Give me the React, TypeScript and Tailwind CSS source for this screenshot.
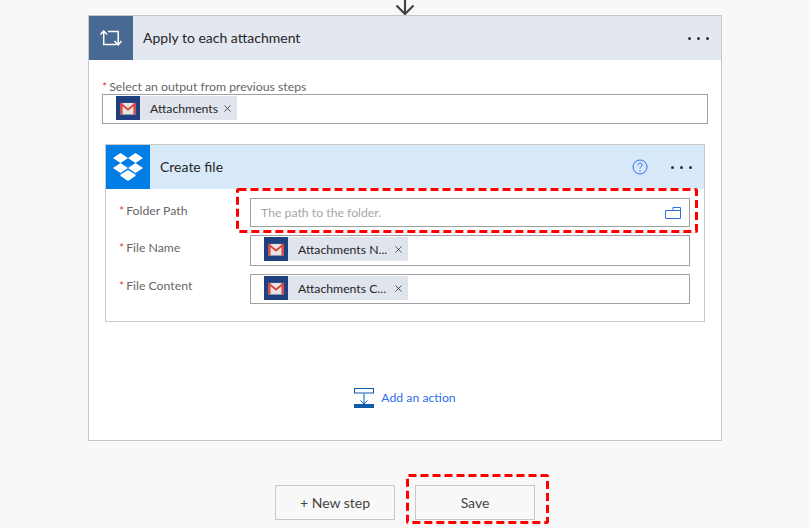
import { X } from "lucide-react";

function GmailIcon() {
  return (
    <div className="w-6 h-6 bg-[#1f3f7f] flex items-center justify-center shrink-0">
      <svg width="16" height="13" viewBox="0 0 17 14" preserveAspectRatio="none">
        <rect x="0.5" y="1" width="16" height="12.5" fill="#e8e4e2" />
        <path d="M0.5 1.5 L8.5 8 L16.5 1.5" fill="none" stroke="#d8453a" strokeWidth="2" />
        <path d="M1.5 1 V13.5 M15.5 1 V13.5" stroke="#d8453a" strokeWidth="2.4" />
      </svg>
    </div>
  );
}

function Token({ label, width }: { label: string; width: string }) {
  return (
    <div className={`flex items-center h-6 bg-[#e0e4ed] ${width}`}>
      <GmailIcon />
      <span className="ml-[10px] pt-[3px] text-[12.25px] text-[#252525] whitespace-nowrap">{label}</span>
      <X className="ml-auto mr-[4px] mt-[1px] text-[#333]" size={11} strokeWidth={1.8} />
    </div>
  );
}

function Dots() {
  return (
    <div className="flex gap-[6px]">
      <span className="w-[3px] h-[3px] rounded-full bg-[#333]" />
      <span className="w-[3px] h-[3px] rounded-full bg-[#333]" />
      <span className="w-[3px] h-[3px] rounded-full bg-[#333]" />
    </div>
  );
}

function FieldLabel({ text }: { text: string }) {
  return (
    <div className="w-[144px] pl-[13px] text-[12.25px] leading-[16px] text-[#666] whitespace-nowrap">
      <span className="text-[#e0433b] mr-[2px]">*</span>
      {text}
    </div>
  );
}

function DashedBox({ w, h, className }: { w: number; h: number; className: string }) {
  return (
    <svg className={`absolute ${className}`} width={w} height={h} fill="none">
      <rect x="1.5" y="1.5" width={w - 3} height={h - 3} rx="1" stroke="#fe0000" strokeWidth="3" strokeDasharray="8 4" />
    </svg>
  );
}

export default function App() {
  return (
    <div className="relative w-[809px] h-[528px] overflow-hidden bg-[#f8f8f8] font-['Lato',sans-serif]">
      <div className="flex justify-center h-[15px] ml-[1px] items-end">
        <svg width="20" height="15" viewBox="0 0 20 15" fill="none" stroke="#444" strokeWidth="2.2">
          <path d="M10 -2 V14 M1.5 5.5 L10 14 L18.5 5.5" />
        </svg>
      </div>

      <div className="ml-[88px] w-[634px] h-[426px] bg-white border border-[#c8c8c8]">
        <div className="flex items-center h-11 bg-[#e3e7ef]">
          <div className="w-11 h-11 bg-[#486991] flex items-center justify-center">
            <svg width="22" height="16" viewBox="0 0 22 16" fill="none" stroke="#fff" strokeWidth="1.5">
              <path d="M0.5 4.5 L3.7 1 L7 4.5 M3.7 1.5 V14.5 H16.5 M8 1.5 H18.2 V15 M14.5 11 L18.2 15 L21.5 11" />
            </svg>
          </div>
          <span className="ml-[10px] mb-[2px] text-[14px] text-[#252525]">Apply to each attachment</span>
          <div className="ml-auto mr-[12px]">
            <Dots />
          </div>
        </div>

        <div className="mt-[20px] ml-[13px] h-[14px] leading-[14px] text-[12.25px] text-[#666]">
          <span className="text-[#e0433b] mr-[2px]">*</span>
          Select an output from previous steps
        </div>
        <div className="ml-[13px] w-[606px] h-[30px] border border-[#a0a0a0] pl-[13px] pt-[1px]">
          <Token label="Attachments" width="w-[121px]" />
        </div>

        <div className="relative mt-[20px] ml-[16px] w-[600px] h-[178px] border border-[#c8c8c8]">
          <div className="flex items-center h-11 bg-[#d8eafa]">
            <div className="w-11 h-11 bg-[#007ee5] flex items-center justify-center">
              <svg width="30" height="28" viewBox="2 1 28 28" preserveAspectRatio="none" fill="#fff">
                <path d="M9 1 L16 6 L9 11 L2 6 Z M23 1 L30 6 L23 11 L16 6 Z M9 11 L16 16 L9 21 L2 16 Z M23 11 L30 16 L23 21 L16 16 Z" />
                <path d="M9 22.5 L16 18 L23 22.5 L23 24 L16 29 L9 24 Z" />
              </svg>
            </div>
            <span className="ml-[10px] mb-[2px] text-[14px] text-[#252525]">Create file</span>
            <svg className="ml-auto" width="16" height="16" viewBox="0 0 16 16" fill="none" stroke="#2f6fe8">
              <circle cx="8" cy="8" r="7" />
              <path d="M5.8 6.2 C5.8 3.5 10.2 3.5 10.2 6 C10.2 7.6 8 7.6 8 9.6" />
              <path d="M8 11 V12.2" />
            </svg>
            <div className="ml-[23px] mr-[12px]">
              <Dots />
            </div>
          </div>

          <div className="flex items-start mt-[9px]">
            <div className="pt-[5px]"><FieldLabel text="Folder Path" /></div>
            <div className="flex items-center justify-between w-[440px] h-[29px] border border-[#a0a0a0] pl-[10px] pr-[8px]">
              <span className="pt-[2px] text-[12.25px] text-[#a6a6a6]">The path to the folder.</span>
              <svg width="16" height="12" viewBox="0 0 16 12" fill="none" stroke="#2f6fe8">
                <path d="M0.5 3.5 H8 V0.5 H15.5 V11.5 H0.5 Z M8 3.5 H15.5" />
              </svg>
            </div>
          </div>
          <div className="flex items-start mt-[8px]">
            <div className="pt-[5px]"><FieldLabel text="File Name" /></div>
            <div className="w-[440px] h-[31px] border border-[#a0a0a0] pl-[13px] pt-[1px]">
              <Token label="Attachments N..." width="w-[144px]" />
            </div>
          </div>
          <div className="flex items-start mt-[8px]">
            <div className="pt-[4px]"><FieldLabel text="File Content" /></div>
            <div className="w-[440px] h-[30px] border border-[#a0a0a0] pl-[13px] pt-[1px]">
              <Token label="Attachments C..." width="w-[144px]" />
            </div>
          </div>

          <DashedBox w={462} h={45} className="left-[130px] top-[43px]" />
        </div>

        <div className="flex items-center justify-center gap-[7px] mt-[66px]">
          <svg width="20" height="20" viewBox="0 0 20 20" fill="none">
            <rect x="0.5" y="0.5" width="19" height="4.5" stroke="#0f5ba8" />
            <path d="M10 5 V15" stroke="#5b9bd5" strokeWidth="1.6" />
            <path d="M6.5 12.5 L10 16 L13.5 12.5" stroke="#0f5ba8" />
            <rect x="0" y="16" width="20" height="4" fill="#0f5ba8" />
          </svg>
          <span className="text-[12.25px] text-[#2f6fe8]">Add an action</span>
        </div>
      </div>

      <div className="flex justify-center gap-5 mt-[44px] ml-[1px]">
        <button className="w-[120px] h-[35px] border border-[#c8c8c8] text-[14px] text-[#444]">+ New step</button>
        <div className="relative">
          <button className="w-[120px] h-[35px] border border-[#c8c8c8] text-[14px] text-[#444]">Save</button>
          <DashedBox w={143} h={50} className="left-[-9px] top-[-11px]" />
        </div>
      </div>
    </div>
  );
}
